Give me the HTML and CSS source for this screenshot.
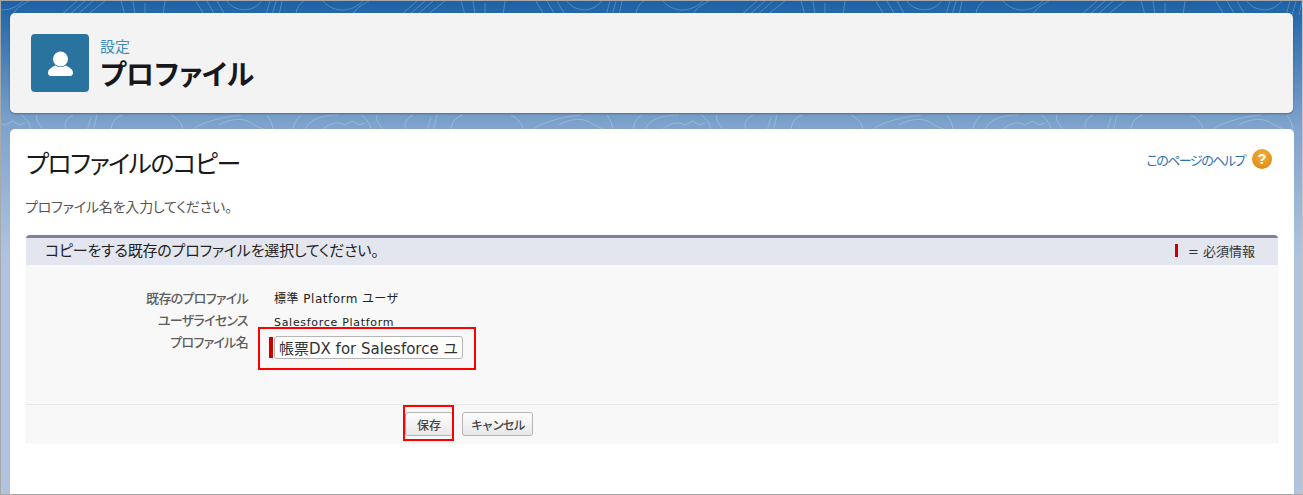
FILE: index.html
```html
<!DOCTYPE html>
<html lang="ja">
<head>
  <meta charset="UTF-8" />
  <title>プロファイルのコピー</title>
  <link rel="stylesheet" href="styles.css">
</head>
<body>
  <div id="frame">
    <svg class="contours" width="1303" height="130" fill="none" stroke="#fff" stroke-opacity="0.22">
      <defs>
        <pattern id="topo" width="340" height="130" patternUnits="userSpaceOnUse" x="60">
          <path d="M0 14L16 0M8 14L24 0M16 14L32 0M26 14L44 0M60 0l4 14M72 0l2 14M84 2v12M104 0l-2 14M135 0l8 14M146 0l8 14M156 0l8 14M166 0c6 10 26 14 36-2M205 14l4-14M211 14l4-14M218 14l3-14M235 14c0-6 4-12 8-14M292 14c2-6 8-10 16-14M262 0c10 12 28 12 40 0"/>
          <path d="M6 130c-4-6-2-12 6-16M30 116l-4 14M36 114l-4 16M50 130c0-8 4-14 12-16M110 114c8 4 12 10 12 16M130 130c8-8 30-14 50-16M158 124c10-6 24-8 32-2 6 4 12 6 18 8M206 114c4 6 6 10 6 16M240 114c-6 6-8 10-8 16M244 130c2-10 14-16 34-16M262 128c8-6 14-8 22-4l8-4 6 4 6-2M300 114c6 4 10 10 10 16M316 114c-2 4 2 10 8 16"/>
        </pattern>
      </defs>
      <rect width="1303" height="130" fill="url(#topo)" stroke="none"/>
    </svg>

    <header id="page-header">
      <div class="header-icon">
        <svg width="25" height="25" viewBox="0 0 25 25" fill="#fff">
          <circle cx="12.5" cy="8" r="7.5"/>
          <path d="M0 21.5c0-3 4-5.500 7.500-7 3 2 7 2 10 0 3.500 1.500 7.500 4 7.500 7 0 2-1 3.500-3 3.500H3c-2 0-3-1.500-3-3.500z"/>
        </svg>
      </div>
      <div class="header-text">
        <div class="eyebrow">設定</div>
        <h1>プロファイル</h1>
      </div>
    </header>

    <main id="content">
      <div class="title-row">
        <h2>プロファイルのコピー</h2>
        <a class="help-link">このページのヘルプ<span class="help-icon">?</span></a>
      </div>
      <p class="intro">プロファイル名を入力してください。</p>

      <section id="edit-block">
        <div class="block-header">
          <h3>コピーをする既存のプロファイルを選択してください。</h3>
          <div class="legend"><span class="req-mark"></span>= 必須情報</div>
        </div>
        <div class="block-body">
          <div class="field">
            <div class="field-label">既存のプロファイル</div>
            <div class="field-value">標準 Platform ユーザ</div>
          </div>
          <div class="field">
            <div class="field-label">ユーザライセンス</div>
            <div class="field-value small">Salesforce Platform</div>
          </div>
          <div class="field">
            <div class="field-label">プロファイル名</div>
            <div class="input-wrap">
              <span class="req-bar"></span>
              <div class="text-input">帳票DX for Salesforce ユ</div>
              <span class="callout callout-input"></span>
            </div>
          </div>
        </div>
        <div class="block-footer">
          <div class="btn-wrap">
            <button class="btn">保存</button>
            <span class="callout callout-save"></span>
          </div>
          <button class="btn btn-cancel">キャンセル</button>
        </div>
      </section>
    </main>
  </div>
</body>
</html>
```

FILE: styles.css
```css
* {
  margin: 0;
  padding: 0;
  box-sizing: border-box;
}

html, body {
  width: 1303px;
  height: 495px;
  overflow: hidden;
  font-family: "Noto Sans CJK JP", "Liberation Sans", sans-serif;
  font-feature-settings: "palt";
  background: #fff;
}

#frame {
  position: relative;
  width: 1303px;
  height: 495px;
  padding: 12px 9px 0 9px;
  border: 1px solid #a8a8a8;
  border-right-color: #c4c4c4;
  background: linear-gradient(to bottom, #1c62a6 0, #7fa3cc 125px, #b0c4e0 260px);
  overflow: hidden;
}

.contours {
  position: absolute;
  left: 0;
  top: 0;
}

#page-header {
  position: relative;
  display: flex;
  align-items: center;
  gap: 11px;
  width: 1283px;
  height: 100px;
  padding: 0 21px 0 21px;
  background: #f3f3f3;
  border-radius: 5px;
  box-shadow: 0 1px 2px rgba(0, 0, 0, 0.3);
}

.header-icon {
  display: flex;
  align-items: center;
  justify-content: center;
  width: 58px;
  height: 58px;
  background: #2a739e;
  border-radius: 4px;
}

.header-text {
  margin-top: 2px;
}

.eyebrow {
  font-size: 15px;
  line-height: 18px;
  color: #3f8cc0;
}

h1 {
  font-size: 28px;
  line-height: 36px;
  font-weight: 700;
  color: #16181c;
}

#content {
  position: relative;
  width: 1284px;
  height: 370px;
  margin-top: 16px;
  padding: 16px 15px 0 16px;
  background: #fff;
  border-radius: 5px 5px 0 0;
}

.title-row {
  display: flex;
  justify-content: space-between;
  align-items: flex-start;
  margin-right: -1px;
}

h2 {
  margin-top: -1px;
  font-size: 25px;
  line-height: 36px;
  font-weight: 400;
  letter-spacing: -1.6px;
  color: #1a1a1a;
}

.help-link {
  display: flex;
  align-items: center;
  margin: 4px 8px 0 0;
  font-size: 13px;
  line-height: 22px;
  letter-spacing: -1.5px;
  color: #2f72b0;
}

.help-icon {
  width: 20px;
  height: 20px;
  margin: -3px 0 0 7px;
  border-radius: 50%;
  background: radial-gradient(circle at 50% 35%, #f6b13c, #d97f0c);
  color: #fff;
  font: 700 14px/20px "Liberation Sans", sans-serif;
  letter-spacing: 0;
  text-align: center;
}

.intro {
  margin: 16px 0 0 -1px;
  font-size: 14px;
  line-height: 20px;
  letter-spacing: -0.2px;
  color: #555;
}

#edit-block {
  width: 1252px;
  height: 208px;
  margin-top: 19px;
  display: flex;
  flex-direction: column;
  background: #f8f8f8;
  border-top: 3px solid #7b8298;
  border-radius: 4px;
  box-shadow: 0 0 1px rgba(0, 0, 0, 0.2);
}

.block-header {
  display: flex;
  justify-content: space-between;
  align-items: center;
  height: 27px;
  padding: 0 23px 0 19px;
  background: #e3e6ef;
}

h3 {
  margin-top: -3px;
  font-size: 15px;
  line-height: 24px;
  font-weight: 400;
  letter-spacing: -0.2px;
  color: #222;
}

.legend {
  display: flex;
  align-items: center;
  margin-top: -3px;
  font-family: "DejaVu Sans", "Noto Sans CJK JP", sans-serif;
  font-size: 13px;
  color: #333;
}

.req-mark {
  width: 3px;
  height: 13px;
  margin-right: 10px;
  background: #c00;
}

.block-body {
  flex: 1;
  padding-top: 24px;
  display: flex;
  flex-direction: column;
}

.field {
  display: flex;
  height: 22px;
  align-items: flex-start;
}

.field:last-child {
  height: auto;
}

.field-label {
  width: 222px;
  text-align: right;
  font-size: 13px;
  line-height: 18px;
  font-weight: 500;
  letter-spacing: -0.7px;
  color: #5d5d5d;
}

.field-value {
  margin: 1px 0 0 26px;
  font-family: "DejaVu Sans", "Noto Sans CJK JP", sans-serif;
  font-size: 12px;
  line-height: 18px;
  letter-spacing: 0.5px;
  color: #222;
}

.field-value.small {
  font-size: 11px;
  margin-top: 3px;
  letter-spacing: 0.7px;
}

.input-wrap {
  position: relative;
  display: flex;
  align-items: center;
  margin: 3px 0 0 21px;
}

.req-bar {
  width: 4px;
  height: 21px;
  margin-right: 1px;
  background: #c00;
}

.text-input {
  width: 189px;
  height: 23px;
  padding: 0 4px;
  overflow: hidden;
  white-space: nowrap;
  background: #fff;
  border: 1px solid #b5b5b5;
  border-radius: 3px;
  font-family: "DejaVu Sans", "Noto Sans CJK JP", sans-serif;
  font-size: 15px;
  line-height: 24px;
  color: #333;
}

.callout {
  position: absolute;
  border: 2px solid #f00;
  pointer-events: none;
}

.callout-input {
  left: -11px;
  top: -9px;
  width: 218px;
  height: 43px;
}

.callout-save {
  left: -2px;
  top: -7px;
  width: 51px;
  height: 36px;
}

.block-footer {
  display: flex;
  align-items: center;
  gap: 9px;
  height: 39px;
  padding-left: 379px;
  border-top: 1px solid #e8e8e8;
  border-radius: 0 0 4px 4px;
}

.btn-wrap {
  position: relative;
  display: flex;
}

.btn {
  height: 24px;
  padding: 0 11px;
  font-family: inherit;
  font-size: 12px;
  font-weight: 500;
  color: #444;
  background: linear-gradient(to bottom, #fdfdfd, #e8e8e8);
  border: 1px solid #b5b5b5;
  border-radius: 3px;
}

.btn-cancel {
  padding: 0 8px;
  letter-spacing: -1.4px;
}
```
